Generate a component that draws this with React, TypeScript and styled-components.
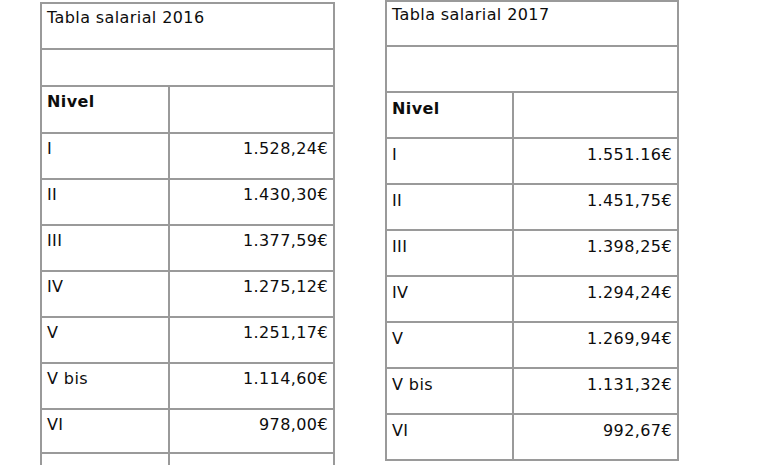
import React from "react"
import styled, {createGlobalStyle} from 'styled-components'

type SalaryRow = {
    level: string,
    amount: string
}

type SalaryTableData = {
    title: string,
    top: number,
    offset: number,
    levelWidth: number,
    amountWidth: number,
    titleInset: number,
    bodyInset: number,
    headHeights: number[],
    rowHeights: number[],
    trailing?: boolean,
    rows: SalaryRow[]
}

const GlobalStyle = createGlobalStyle`
	html, body {
		margin: 0;
		padding: 0;
		background: #FFF;
		overflow: hidden;
	}

	body {
		font-family: "DejaVu Sans", Verdana, sans-serif;
		color: #0D0D0D;
	}
`

const StyledPage = styled.div`
	display: flex;
	align-items: flex-start;
	width: 777px;
	height: 465px;
	overflow: hidden;
`

const StyledTable = styled.div<{$top: number, $offset: number}>`
	display: flex;
	flex-direction: column;
	gap: 2px;
	padding: 2px;
	background-color: #9A9A9A;
	margin-top: ${props => props.$top}px;
	margin-left: ${props => props.$offset}px;
	flex-shrink: 0;
`

const StyledTrailing = styled.div`
	margin-bottom: -40px;
`

const StyledRow = styled.div<{$columns: string, $height: number}>`
	display: grid;
	grid-template-columns: ${props => props.$columns};
	gap: 2px;
	height: ${props => props.$height}px;
`

const StyledCell = styled.div<{$align?: 'left' | 'right', $wide?: boolean, $bold?: boolean, $inset?: number}>`
	background-color: #FFF;
	padding: ${props => props.$inset ?? 5}px 5px 0 5px;
	font-size: 16px;
	letter-spacing: 0.4px;
	line-height: 19px;
	text-align: ${props => props.$align || 'left'};
	font-weight: ${props => props.$bold ? 'bold' : 'normal'};
	grid-column: ${props => props.$wide ? '1 / -1' : 'auto'};
	white-space: nowrap;
	overflow: hidden;
`

const tables: SalaryTableData[] = [
    {
        title: 'Tabla salarial 2016',
        top: 2,
        offset: 40,
        levelWidth: 126,
        amountWidth: 163,
        titleInset: 4,
        bodyInset: 5,
        headHeights: [44, 35, 45],
        rowHeights: [44, 44, 44, 44, 44, 44, 42],
        trailing: true,
        rows: [
            {level: 'I', amount: '1.528,24€'},
            {level: 'II', amount: '1.430,30€'},
            {level: 'III', amount: '1.377,59€'},
            {level: 'IV', amount: '1.275,12€'},
            {level: 'V', amount: '1.251,17€'},
            {level: 'V bis', amount: '1.114,60€'},
            {level: 'VI', amount: '978,00€'},
        ]
    },
    {
        title: 'Tabla salarial 2017',
        top: 0,
        offset: 50,
        levelWidth: 125,
        amountWidth: 163,
        titleInset: 3,
        bodyInset: 6,
        headHeights: [43, 44, 44],
        rowHeights: [44, 44, 44, 44, 44, 44, 44],
        rows: [
            {level: 'I', amount: '1.551.16€'},
            {level: 'II', amount: '1.451,75€'},
            {level: 'III', amount: '1.398,25€'},
            {level: 'IV', amount: '1.294,24€'},
            {level: 'V', amount: '1.269,94€'},
            {level: 'V bis', amount: '1.131,32€'},
            {level: 'VI', amount: '992,67€'},
        ]
    }
]

const SalaryTable = ({title, top, offset, levelWidth, amountWidth, titleInset, bodyInset, headHeights, rowHeights, trailing, rows}: SalaryTableData) => {
    const columns = `${levelWidth}px ${amountWidth}px`

    return (
        <StyledTable $top={top} $offset={offset}>
            <StyledRow $columns={columns} $height={headHeights[0]}>
                <StyledCell $wide $inset={titleInset}>{title}</StyledCell>
            </StyledRow>
            <StyledRow $columns={columns} $height={headHeights[1]}>
                <StyledCell $wide/>
            </StyledRow>
            <StyledRow $columns={columns} $height={headHeights[2]}>
                <StyledCell $bold $inset={bodyInset}>Nivel</StyledCell>
                <StyledCell/>
            </StyledRow>
            {rows.map((row, index) => (
                <StyledRow key={row.level} $columns={columns} $height={rowHeights[index]}>
                    <StyledCell $inset={bodyInset}>{row.level}</StyledCell>
                    <StyledCell $align="right" $inset={bodyInset}>{row.amount}</StyledCell>
                </StyledRow>
            ))}
            {trailing && (
                <StyledTrailing>
                    <StyledRow $columns={columns} $height={60}>
                        <StyledCell/>
                        <StyledCell/>
                    </StyledRow>
                </StyledTrailing>
            )}
        </StyledTable>
    )
}

const App = () => {
    return (
        <>
            <GlobalStyle/>
            <StyledPage>
                {tables.map(table => (
                    <SalaryTable key={table.title} {...table}/>
                ))}
            </StyledPage>
        </>
    )
}

export default App
